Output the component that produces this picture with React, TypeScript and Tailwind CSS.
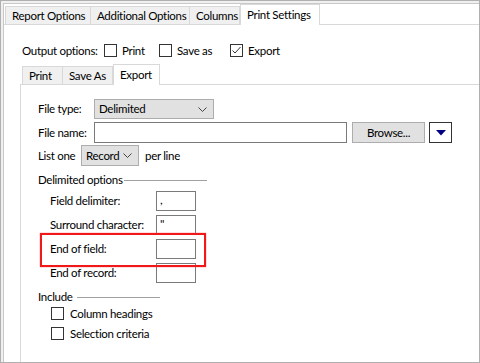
import type { ReactNode } from 'react'

function Checkbox({ checked = false }: { checked?: boolean }) {
  return (
    <div className="w-[13px] h-[13px] shrink-0 border border-[#333333] bg-white flex items-center justify-center">
      {checked && (
        <svg width="11" height="11" viewBox="0 0 11 11">
          <path d="M1.5 5.5 L4 8 L9.5 2" fill="none" stroke="#333333" strokeWidth="1" />
        </svg>
      )}
    </div>
  )
}

function Chevron() {
  return (
    <svg width="9" height="5" viewBox="0 0 9 5" className="shrink-0">
      <path d="M0.5 0.5 L4.5 4.5 L8.5 0.5" fill="none" stroke="#444444" strokeWidth="1" />
    </svg>
  )
}

function Select({ value, width }: { value: string; width: string }) {
  return (
    <div className={`${width} h-full shrink-0 bg-[#e1e1e1] border border-[#adadad] flex items-center justify-between pl-[4px] pr-[6px]`}>
      <span>{value}</span>
      <Chevron />
    </div>
  )
}

function FieldRow({ label, value = '' }: { label: string; value?: string }) {
  return (
    <div className="flex items-center h-[20px]">
      <span className="w-[106px] shrink-0">{label}</span>
      <div className="w-[40px] h-[20px] border border-[#7a7a7a] bg-white pl-[3px] pt-[2px] text-[12px]">
        {value}
      </div>
    </div>
  )
}

function GroupTitle({ label, width }: { label: string; width: string }) {
  return (
    <div className="flex items-center h-[12px]">
      <span className={`${width} shrink-0`}>{label}</span>
      <div className="w-[83px] h-px bg-[#a0a0a0]" />
    </div>
  )
}

function Tab({ children, width, selected = false }: { children: ReactNode; width: string; selected?: boolean }) {
  return selected ? (
    <div className={`${width} h-[21px] shrink-0 -mb-px relative z-10 bg-white border-l border-r border-t border-[#d9d9d9] pl-[6px] flex items-center`}>
      {children}
    </div>
  ) : (
    <div className={`${width} h-[18px] shrink-0 bg-[#f0f0f0] border-r border-t border-[#d9d9d9] first:border-l pl-[6px] flex items-center`}>
      {children}
    </div>
  )
}

export default function App() {
  return (
    <div className="relative w-[480px] h-[363px] overflow-hidden whitespace-nowrap bg-[#f0f0f0] border border-[#b0b0b0] pl-[2px] pt-[2px] text-[11.5px] tracking-[-0.3px] leading-none text-black [font-family:Lato,sans-serif]">
      <div className="h-full bg-white border-l border-t border-[#c8c8c8] flex flex-col">
        {/* Top tabs */}
        <div className="flex items-end h-[20px] pl-[1px]">
          <Tab width="w-[86px]">Report Options</Tab>
          <Tab width="w-[99px]">Additional Options</Tab>
          <Tab width="w-[50px]">Columns</Tab>
          <Tab width="w-[80px]" selected>Print Settings</Tab>
        </div>

        <div className="flex-1 border-t border-[#d9d9d9] flex flex-col">
          {/* Output options */}
          <div className="flex items-center h-[13px] mt-[19px] pl-[18px]">
            <span className="w-[82px] shrink-0">Output options:</span>
            <div className="w-[55px] shrink-0 flex items-center gap-[5px]">
              <Checkbox />
              <span>Print</span>
            </div>
            <div className="w-[71px] shrink-0 flex items-center gap-[5px]">
              <Checkbox />
              <span>Save as</span>
            </div>
            <div className="flex items-center gap-[5px]">
              <Checkbox checked />
              <span>Export</span>
            </div>
          </div>

          {/* Inner tabs */}
          <div className="flex items-end h-[20px] mt-[7px] ml-[16px] pl-[2px]">
            <Tab width="w-[41px]">Print</Tab>
            <Tab width="w-[50px]">Save As</Tab>
            <Tab width="w-[47px]" selected>Export</Tab>
          </div>

          <div className="flex-1 ml-[16px] border-l border-t border-[#d9d9d9] pl-[17px] pt-[14px] flex flex-col">
            <div className="flex items-center h-[20px]">
              <span className="w-[56px] shrink-0">File type:</span>
              <Select value="Delimited" width="w-[120px]" />
            </div>

            <div className="flex items-center h-[21px] mt-[3px]">
              <span className="w-[56px] shrink-0">File name:</span>
              <div className="w-[253px] h-full shrink-0 border border-[#7a7a7a] bg-white" />
              <div className="w-[73px] h-full shrink-0 ml-[5px] bg-[#e1e1e1] border border-[#adadad] flex items-center justify-center">
                Browse...
              </div>
              <div className="w-[23px] h-full shrink-0 ml-[4px] bg-white border border-[#333333] flex items-center justify-center">
                <svg width="10" height="6" viewBox="0 0 10 6">
                  <polygon points="0,0 10,0 5,5.5" fill="#000080" />
                </svg>
              </div>
            </div>

            <div className="flex items-center h-[21px] mt-[2px]">
              <span className="w-[43px] shrink-0">List one</span>
              <Select value="Record" width="w-[58px]" />
              <span className="ml-[6px]">per line</span>
            </div>

            <div className="mt-[8px]">
              <GroupTitle label="Delimited options" width="w-[86px]" />
            </div>

            <div className="flex flex-col gap-[4px] mt-[5px] pl-[12px]">
              <FieldRow label="Field delimiter:" value="," />
              <FieldRow label="Surround character:" value={'"'} />
              <FieldRow label="End of field:" />
              <FieldRow label="End of record:" />
            </div>

            <div className="mt-[8px]">
              <GroupTitle label="Include" width="w-[39px]" />
            </div>

            <div className="flex flex-col gap-[7px] mt-[4px] pl-[13px]">
              <div className="flex items-center gap-[6px]">
                <Checkbox />
                <span>Column headings</span>
              </div>
              <div className="flex items-center gap-[6px]">
                <Checkbox />
                <span>Selection criteria</span>
              </div>
            </div>
          </div>
        </div>
      </div>

      {/* highlight annotation */}
      <div className="absolute left-[39px] top-[232px] w-[166px] h-[34px] border-2 border-[#f01818] shadow-[0_0_1px_#ff4040]" />
    </div>
  )
}
